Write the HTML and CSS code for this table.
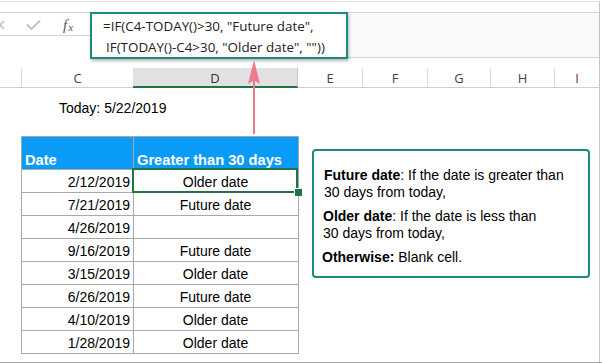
FILE: index.html
```html
<!DOCTYPE html>
<html>
<head>
<meta charset="utf-8">
<link rel="stylesheet" href="styles.css">
</head>
<body>
<div class="frame">
  <div class="sheet">
    <div class="fbar">
      <div class="ficons">
        <svg class="ico-x" width="8" height="12" viewBox="0 0 8 12"><path d="M-4 2 L4 10 M-4 10 L4 2" stroke="#c4c4c4" stroke-width="1.6" fill="none"/></svg>
        <svg class="ico-check" width="15" height="12" viewBox="0 0 15 12"><path d="M1 5.5 L5.5 10 L14 1.5" stroke="#c4c4c4" stroke-width="2" fill="none"/></svg>
        <span class="fx"><i>f</i><sub>x</sub></span>
      </div>
      <div class="fbox">
        <div class="fl1">=IF(C4-TODAY()&gt;30, "Future date",</div>
        <div class="fl2">IF(TODAY()-C4&gt;30, "Older date", ""))</div>
      </div>
      <div class="frest"></div>
    </div>
    <div class="colhead">
      <div class="ch rh"></div>
      <div class="ch cc">C</div>
      <div class="ch cd">D</div>
      <div class="ch ce">E</div>
      <div class="ch cf">F</div>
      <div class="ch cg">G</div>
      <div class="ch chh">H</div>
      <div class="ch ci">I</div>
    </div>
    <div class="grid-body">
      <div class="left">
        <div class="today">Today: 5/22/2019</div>
        <div class="tbl">
          <div class="th">Date</div>
          <div class="th">Greater than 30 days</div>
          <div class="td num">2/12/2019</div><div class="td res sel">Older date</div>
          <div class="td num">7/21/2019</div><div class="td res">Future date</div>
          <div class="td num">4/26/2019</div><div class="td res"></div>
          <div class="td num">9/16/2019</div><div class="td res">Future date</div>
          <div class="td num">3/15/2019</div><div class="td res">Older date</div>
          <div class="td num">6/26/2019</div><div class="td res">Future date</div>
          <div class="td num">4/10/2019</div><div class="td res">Older date</div>
          <div class="td num">1/28/2019</div><div class="td res">Older date</div>
        </div>
      </div>
      <div class="note">
        <p class="p1"><b>Future date</b>: If the date is greater than<br>30 days from today,</p>
        <p class="p2"><b>Older date</b>: If the date is less than<br>30 days from today,</p>
        <p class="p3"><b>Otherwise:</b> Blank cell.</p>
      </div>
    </div>
    <svg class="arrow" width="16" height="78" viewBox="0 0 16 78">
      <rect x="7" y="14" width="2" height="62" fill="#eb7b8d"/>
      <path d="M8 2 L14 26 L8 22 L2 26 Z" fill="#eb7b8d"/>
    </svg>
  </div>
</div>
</body>
</html>
```

FILE: styles.css
```css
* { box-sizing: border-box; }
html, body { margin: 0; padding: 0; background: #fff; }
body { width: 602px; height: 363px; overflow: hidden; }

.frame {
  width: 602px;
  height: 363px;
  border-bottom: 2px solid #a6a6a6;
}
.sheet {
  position: relative;
  width: 600px;
  height: 361px;
  margin-top: 1px;
  border-top: 1px solid #e2e2e2;
  border-right: 1px solid #c6c6c6;
  padding-top: 10px;
  font-family: "Liberation Sans", Arial, sans-serif;
  color: #000;
}

/* formula bar */
.fbar {
  display: flex;
  align-items: flex-start;
  height: 47px;
}
.ficons {
  width: 90px;
  height: 24px;
  border-top: 1px solid #d4d4d4;
  border-bottom: 1px solid #d4d4d4;
  display: flex;
  align-items: center;
  position: relative;
}
.ico-x { margin-left: 0; margin-top: 1px; }
.ico-check { margin-left: 18px; margin-top: 1px; }
.fx {
  margin-left: 22px;
  margin-top: 3px;
  font-family: "Liberation Serif", "Times New Roman", serif;
  font-size: 15px;
  color: #555;
  line-height: 16px;
}
.fx i { font-style: italic; }
.fx sub { font-size: 11px; font-style: italic; vertical-align: -1px; margin-left: 1px; }

.fbox {
  width: 258px;
  height: 47px;
  border: 2px solid #1d8a7d;
  background: #fff;
  box-shadow: 1px 2px 3px rgba(0,0,0,0.28);
  font-family: "Open Sans", "Noto Sans", sans-serif;
  font-size: 13.4px;
  line-height: 21px;
  color: #222;
  padding-top: 2px;
  position: relative;
  z-index: 2;
}
.fl1 { padding-left: 11px; }
.fl2 { padding-left: 14px; }
.frest {
  flex: 1;
  height: 46px;
  border-top: 1px solid #d4d4d4;
  border-bottom: 1px solid #d4d4d4;
  background: #f9f9f9;
}

/* column headers */
.colhead {
  display: flex;
  height: 20px;
  margin-top: 9px;
  border-bottom: 1px solid #cfcfcf;
  font-family: "Open Sans", "Noto Sans", sans-serif;
  font-size: 13px;
  color: #444;
}
.ch {
  height: 19px;
  line-height: 20px;
  text-align: center;
  border-left: 1px solid #dadada;
}
.rh { width: 21px; border-left: none; }
.cc { width: 112px; }
.cd {
  width: 165px;
  height: 20px;
  margin-bottom: -1px;
  border-left: none;
  background: #e1e1e1;
  border-bottom: 2px solid #217346;
  border-right: 1px solid #c6c6c6;
  color: #333;
}
.ce { width: 64px; border-left: none; }
.cf { width: 65px; }
.cg { width: 63px; }
.chh { width: 64px; }
.ci { flex: 1; color: #7a2a6a; }

/* sheet body */
.grid-body {
  display: flex;
  align-items: flex-start;
}
.left {
  width: 299px;
  padding-left: 21px;
  padding-top: 12px;
}
.today {
  margin-left: 38px;
  font-size: 14px;
  line-height: 16px;
  height: 16px;
}
.tbl {
  margin-top: 20px;
  display: grid;
  grid-template-columns: 112px 165px;
  border-left: 1px solid #a9a9a9;
  border-top: 1px solid #a9a9a9;
  width: 278px;
}
.th, .td {
  border-right: 1px solid #a9a9a9;
  border-bottom: 1px solid #a9a9a9;
}
.th {
  height: 33px;
  background: #0a9bf7;
  color: #fff;
  font-weight: bold;
  font-size: 14.67px;
  line-height: 17px;
  padding: 0 3px 0 3px;
  display: flex;
  align-items: flex-end;
}
.td {
  height: 23px;
  font-size: 14px;
  line-height: 20px;
  padding-top: 2px;
}
.num { text-align: right; padding-right: 3px; }
.res { text-align: center; padding-right: 1px; }
.sel { position: relative; }
.sel::before {
  content: "";
  position: absolute;
  left: -2px;
  top: -2px;
  right: 0px;
  bottom: -1px;
  border: 2px solid #217346;
}
.sel::after {
  content: "";
  position: absolute;
  width: 7px;
  height: 7px;
  right: -4px;
  bottom: -4px;
  background: #217346;
  border-left: 1px solid #fff;
  border-top: 1px solid #fff;
}

.note {
  margin-left: 13px;
  margin-top: 61px;
  width: 278px;
  height: 129px;
  border: 2px solid #1b8b7e;
  border-radius: 4px;
  padding: 16px 8px 0 10px;
  font-size: 14px;
  line-height: 17px;
  color: #000;
}
.note p { margin: 0 0 7px 0; }
.note .p2 { margin-left: -1px; }
.note .p3 { margin-left: -2px; }

.arrow {
  position: absolute;
  left: 246px;
  top: 56px;
  z-index: 3;
}
```
